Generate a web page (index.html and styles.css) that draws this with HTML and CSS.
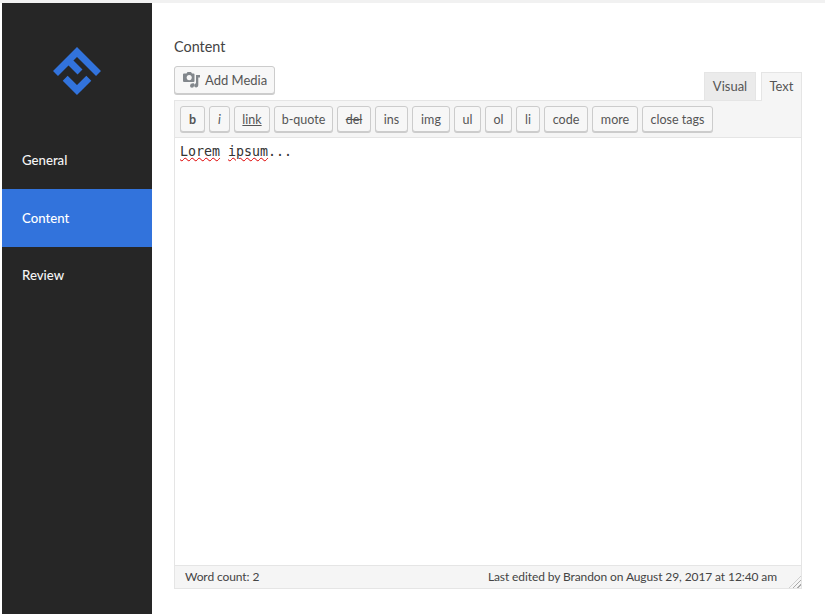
FILE: index.html
```html
<!DOCTYPE html>
<html lang="en">
<head>
    <meta charset="UTF-8">
    <title>Content</title>
    <link rel="stylesheet" href="styles.css">
</head>
<body>
    <div class="page">
        <nav class="sidebar">
            <div class="logo">
                <svg width="50" height="50" viewBox="0 0 50 50">
                    <path d="M3.500 27.500 L25 6 L46.500 27.500 M17 15 L28 26 M13.200 32.200 L25 44 L36.800 32.200" fill="none" stroke="#3273dc" stroke-width="7"/>
                </svg>
            </div>
            <a class="nav-item" href="#">General</a>
            <a class="nav-item active" href="#">Content</a>
            <a class="nav-item" href="#">Review</a>
        </nav>
        <main class="main">
            <h1 class="field-label">Content</h1>
            <div class="editor-top">
                <button class="media-btn">
                    <svg width="17" height="16" viewBox="0 0 17 16">
                        <path d="M1 1.500h2.500L4.500 0h3.500l1 1.500h1.500q1 0 1 1v6.500q0 1-1 1H1q-1 0-1-1V2.500q0-1 1-1z M6.200 3a2.600 2.600 0 1 0 .01 0z" fill="#82878c" fill-rule="evenodd"/>
                        <path d="M13 3h4v2.500h-1.700v7.800a2.100 2.100 0 1 1-2.300-2.100z M7 11.500l4-.3v2.600a2 2 0 1 1-2-2z" fill="#82878c"/>
                    </svg>
                    Add Media
                </button>
                <div class="tabs">
                    <div class="tab">Visual</div>
                    <div class="tab current">Text</div>
                </div>
            </div>
            <div class="editor">
                <div class="toolbar">
                    <button class="tool bold">b</button>
                    <button class="tool italic">i</button>
                    <button class="tool under">link</button>
                    <button class="tool">b-quote</button>
                    <button class="tool strike">del</button>
                    <button class="tool">ins</button>
                    <button class="tool">img</button>
                    <button class="tool">ul</button>
                    <button class="tool">ol</button>
                    <button class="tool">li</button>
                    <button class="tool">code</button>
                    <button class="tool">more</button>
                    <button class="tool">close tags</button>
                </div>
                <div class="text-area"><span class="typo">Lorem</span> <span class="typo">ipsum</span>...</div>
                <div class="status">
                    <span>Word count: 2</span>
                    <span>Last edited by Brandon on August 29, 2017 at 12:40 am</span>
                    <i class="grip"></i>
                </div>
            </div>
        </main>
    </div>
</body>
</html>
```

FILE: styles.css
```css
* {
    margin: 0;
    padding: 0;
    box-sizing: border-box;
}
html, body {
    width: 100%;
    height: 100%;
    overflow: hidden;
    background: white;
    font-family: 'Lato', sans-serif;
    color: #444;
}
body {
    border-top: 3px solid #f1f1f1;
}
.page {
    display: flex;
    height: 100%;
    padding-left: 2px;
}
.sidebar {
    width: 150px;
    background: #262626;
    flex-shrink: 0;
}
.logo {
    height: 128px;
    padding: 43px 0 0 50px;
}
.logo svg {
    display: block;
}
.nav-item {
    display: block;
    height: 58px;
    line-height: 58px;
    padding-left: 20px;
    color: #f5f5f5;
    font-size: 13.2px;
    font-weight: 500;
    text-decoration: none;
}
.nav-item:last-child {
    line-height: 56px;
}
.nav-item.active {
    background: #3273dc;
    color: white;
}
.main {
    flex: 1;
    padding: 35px 23px 0 22px;
}
.field-label {
    font-size: 14.4px;
    font-weight: 400;
    line-height: 18px;
    color: #444;
    margin-bottom: 10px;
}
.editor-top {
    display: flex;
    justify-content: space-between;
    align-items: flex-end;
}
.media-btn {
    display: flex;
    align-items: center;
    gap: 5px;
    width: 101px;
    height: 28px;
    margin-bottom: 6px;
    padding-left: 8px;
    background: #f7f7f7;
    border: 1px solid #ccc;
    border-radius: 3px;
    box-shadow: 0 1px 0 #ccc;
    font: 13px 'Lato', sans-serif;
    color: #555;
}
.tabs {
    display: flex;
    gap: 5px;
}
.tab {
    width: 52px;
    height: 28px;
    line-height: 26px;
    text-align: center;
    font-size: 13px;
    color: #555;
    background: #ebebeb;
    border: 1px solid #e5e5e5;
    border-bottom: none;
}
.tab.current {
    width: 41px;
    height: 29px;
    margin-bottom: -1px;
    background: #f5f5f5;
    position: relative;
}
.editor {
    height: 489px;
    display: flex;
    flex-direction: column;
    border: 1px solid #e5e5e5;
}
.toolbar {
    display: grid;
    grid-template-columns: 25px 21px 36px 59px 34px 33px 38px 27px 27px 24px 44px 46px 71px;
    grid-template-rows: 26px;
    gap: 4px;
    height: 37px;
    padding: 5px 5px 0;
    background: #f5f5f5;
    border-bottom: 1px solid #e5e5e5;
}
.tool {
    background: #f7f7f7;
    border: 1px solid #ccc;
    border-radius: 3px;
    box-shadow: 0 1px 0 #ccc;
    font: 12.5px 'Lato', sans-serif;
    color: #555;
}
.bold {
    font-weight: bold;
}
.italic {
    font-style: italic;
}
.under {
    text-decoration: underline;
}
.strike {
    text-decoration: line-through;
}
.text-area {
    flex: 1;
    padding: 5px;
    background: white;
    font: 13.3px/17px 'DejaVu Sans Mono', monospace;
    color: #333;
}
.typo {
    text-decoration: underline wavy #d00;
    text-decoration-thickness: 1px;
}
.status {
    position: relative;
    display: flex;
    justify-content: space-between;
    height: 23px;
    line-height: 22px;
    padding: 0 24px 0 10px;
    background: #f5f5f5;
    border-top: 1px solid #e5e5e5;
    font-size: 12px;
    letter-spacing: -0.1px;
    color: #444;
}
.grip {
    position: absolute;
    right: 0;
    bottom: 0;
    width: 12px;
    height: 12px;
    background: repeating-linear-gradient(135deg, #f5f5f5 0 2px, #aaa 2px 3px);
    clip-path: polygon(100% 0, 100% 100%, 0 100%);
}
```
